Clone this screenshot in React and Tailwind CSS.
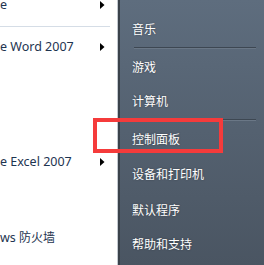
export default function App() {
  const Arrow = () => (
    <svg width="5" height="8" viewBox="0 0 5 8" className="absolute left-[100px]">
      <path d="M0 0 L4.5 4 L0 8 Z" fill="#000" />
    </svg>
  );
  const L = "font-['Segoe_UI','Noto_Sans','Liberation_Sans',sans-serif] text-[12.5px] text-[#1e3450] whitespace-nowrap";
  const R = "font-['Microsoft_YaHei','Noto_Sans_CJK_SC',sans-serif] text-[12px] text-white [text-shadow:0_0_2px_rgba(0,0,0,0.35)]";
  const Row = ({ children, h = "h-[34px]" }) => (
    <div className={`${h} flex items-center pl-[12px] ${R}`}>{children}</div>
  );
  const Sep = () => (
    <div className="h-[4px] flex flex-col justify-center ml-[14px] w-[122px]">
      <div className="h-px bg-[#3d4752]" />
      <div className="h-px bg-[#6a7786]" />
    </div>
  );
  return (
    <div className="relative w-[264px] h-[265px] flex overflow-hidden">
      <div className="w-[117px] h-full bg-white flex flex-col overflow-hidden">
        <div className={`relative h-[18px] -mt-[4px] flex items-center ${L}`}>
          <span>e</span>
          <Arrow />
        </div>
        <div className="mt-[12px] h-px w-[110px] bg-[#d5dde6]" />
        <div className={`relative mt-[8px] h-[24px] flex items-center ${L}`}>
          <span>e Word 2007</span>
          <Arrow />
        </div>
        <div className={`relative mt-[91px] h-[24px] flex items-center ${L}`}>
          <span>e Excel 2007</span>
          <Arrow />
        </div>
        <div className={`relative mt-[52px] h-[24px] flex items-center ${L}`}>
          <span>
            ws <span className="font-['Microsoft_YaHei','Noto_Sans_CJK_SC',sans-serif] text-[12px]">防火墙</span>
          </span>
        </div>
      </div>
      <div className="w-px h-full bg-[#c3c9d0]" />
      <div className="w-[2px] h-full bg-[#3a424b]" />
      <div className="flex-1 h-full bg-gradient-to-b from-[#5e6d7e] to-[#4a5562] flex flex-col pt-[12px]">
        <Row>音乐</Row>
        <Sep />
        <Row>游戏</Row>
        <Row>计算机</Row>
        <Sep />
        <Row>控制面板</Row>
        <Row h="h-[36px]">设备和打印机</Row>
        <Row h="h-[35px]">默认程序</Row>
        <Row h="h-[34px]">帮助和支持</Row>
      </div>
      <div className="absolute left-[93px] top-[118px] w-[130px] h-[35px] border-[4px] border-[#f53b3b]" />
    </div>
  );
}
